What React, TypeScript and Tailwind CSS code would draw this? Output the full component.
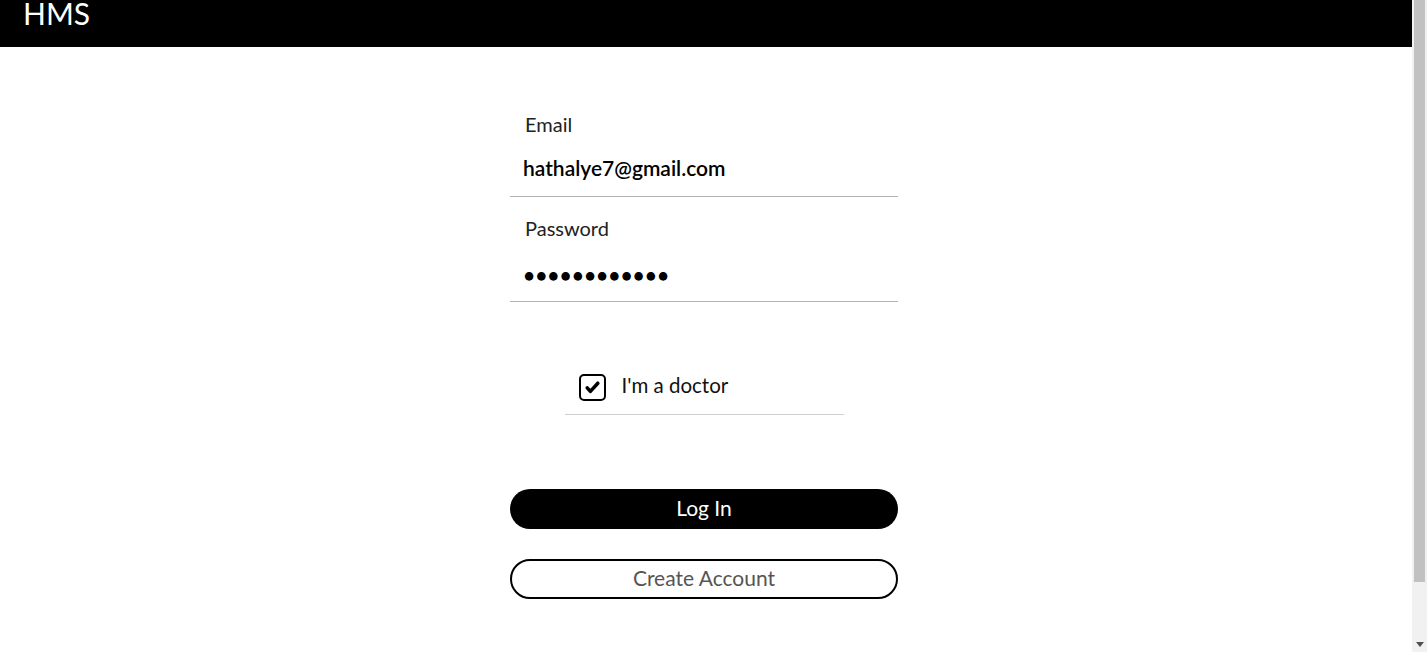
import React from 'react';

function Scrollbar() {
  return (
    <aside className="w-[15px] shrink-0 bg-[#f1f1f1] flex flex-col">
      <div className="mx-[2px] h-[582px] bg-[#c1c1c1]" />
      <div className="flex-1" />
      <div className="h-[15px] flex items-center justify-center">
        <svg viewBox="0 0 8 5" className="w-[8px] h-[5px]">
          <path d="M0 0h8L4 5z" fill="#505050" />
        </svg>
      </div>
    </aside>
  );
}

export default function App() {
  return (
    <div className="flex h-[652px] overflow-hidden bg-white font-['Lato','Liberation_Sans',sans-serif] text-black">
      <div className="flex-1 min-w-0">
        {/* Top bar */}
        <header className="h-[47px] bg-black pl-[23px]">
          <h1 className="text-[30px] leading-[26px] text-white">HMS</h1>
        </header>

        <main className="flex justify-center pr-1 pt-[45px]">
          <form className="w-[388px] flex flex-col" onSubmit={(e) => e.preventDefault()}>
            <div className="border-b border-[#b3b3b3] pt-[20px] pb-[16px]">
              <label className="block pl-[15px] text-[20px] leading-[24px] text-[#222]">Email</label>
              <input
                type="email"
                readOnly
                value="hathalye7@gmail.com"
                className="mt-[19px] block w-full h-[25px] pl-[13px] text-[21px] leading-[25px] font-semibold text-black outline-none bg-transparent"
              />
            </div>
            <div className="border-b border-[#b3b3b3] pt-[19px] pb-[14px]">
              <label className="block pl-[15px] text-[20px] leading-[24px] text-[#222]">Password</label>
              <input
                type="password"
                readOnly
                value="hathalye7123"
                className="mt-[22px] block w-full h-[25px] pl-[13px] text-[21px] leading-[25px] font-semibold text-black outline-none bg-transparent"
              />
            </div>

            {/* Doctor checkbox */}
            <div className="mt-[71px] self-center w-[279px] border-b border-[#cfcfcf] pb-[11px] pl-[14px] flex items-center gap-[16px]">
              <span className="w-[27px] h-[27px] mb-[2px] rounded-[5px] border-2 border-black flex items-center justify-center">
                <svg viewBox="0 0 24 24" className="w-[17px] h-[17px]">
                  <path d="M4.5 12.5l4.5 5L19.5 6" fill="none" stroke="black" strokeWidth="5" strokeLinecap="round" strokeLinejoin="round" />
                </svg>
              </span>
              <span className="mb-[6px] text-[20.5px] leading-[24px] text-[#111]">I'm a doctor</span>
            </div>

            <button className="mt-[74px] h-[40px] pb-[2px] rounded-full bg-black text-white text-[21px]">Log In</button>
            <button className="mt-[30px] h-[40px] pb-[3px] rounded-full border-2 border-black bg-white text-[#555] text-[21px]">
              Create Account
            </button>
          </form>
        </main>
      </div>
      <Scrollbar />
    </div>
  );
}
